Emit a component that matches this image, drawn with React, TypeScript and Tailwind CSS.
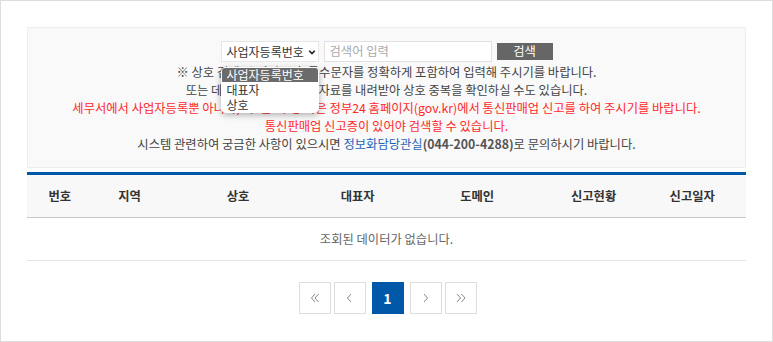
import React from 'react';

const font = { fontFamily: '"Malgun Gothic", "Noto Sans CJK KR", "Noto Sans", sans-serif' };

const columns = [
  { label: '번호', w: 'w-[66px]' },
  { label: '지역', w: 'w-[74px]' },
  { label: '상호', w: 'w-[144px]' },
  { label: '대표자', w: 'w-[96px]' },
  { label: '도메인', w: 'w-[144px]' },
  { label: '신고현황', w: 'w-[90px]' },
  { label: '신고일자', w: 'w-[108px]' },
];

const Chevron: React.FC<{ dir: 'left' | 'right'; double?: boolean }> = ({ dir, double }) => {
  const one = dir === 'left' ? 'M6 2 L2.5 6 L6 10' : 'M3 2 L6.5 6 L3 10';
  const two = dir === 'left' ? 'M9.5 2 L6 6 L9.5 10' : 'M6.5 2 L10 6 L6.5 10';
  return (
    <svg width={double ? 12 : 9} height="12" viewBox={double ? '0 0 12 12' : '0 0 9 12'}>
      <path d={double && dir === 'right' ? 'M2 2 L5.5 6 L2 10' : one} fill="none" stroke="#888" strokeWidth="1" />
      {double && <path d={two} fill="none" stroke="#888" strokeWidth="1" />}
    </svg>
  );
};

const PageButton: React.FC<{ children: React.ReactNode; active?: boolean }> = ({ children, active }) => (
  <button
    className={
      active
        ? 'w-8 h-8 flex items-center justify-center bg-[#0059a8] border border-[#0059a8] text-white text-[14px] font-bold'
        : 'w-8 h-8 flex items-center justify-center bg-white border border-[#ddd]'
    }
  >
    {children}
  </button>
);

const App: React.FC = () => {
  return (
    <div className="w-[773px] h-[342px] bg-white border border-[#ddd] text-[12.3px] text-[#444]" style={font}>
      <div className="px-[26px] pt-[26px]">
        {/* Search box */}
        <div className="h-[141px] bg-[#f9f9f9] border border-[#eee] pt-[13px] flex flex-col items-center">
          <div className="relative flex items-center">
            <div className="w-[98px] h-[21px] bg-white border border-[#e6e6e6] flex items-center justify-between pl-[5px] pr-[2px] text-[12px] text-[#333] whitespace-nowrap">
              <span>사업자등록번호</span>
              <svg width="8" height="8" viewBox="0 0 10 10" className="shrink-0">
                <path d="M1.5 3.5 L5 7 L8.5 3.5" fill="none" stroke="#222" strokeWidth="2" />
              </svg>
            </div>
            <div className="ml-[5px] w-[168px] h-[21px] bg-white border border-[#e0e0e0] flex items-center pl-[5px] text-[#aaa]">
              검색어 입력
            </div>
            <button className="ml-[5px] w-[56px] h-[17px] bg-[#666] text-white leading-[17px]">검색</button>

            {/* Open dropdown list */}
            <div className="absolute left-0 top-[26px] w-[98px] bg-white rounded-[5px] shadow-[0_2px_6px_rgba(0,0,0,0.3)] py-[1px] z-10 text-[12px] whitespace-nowrap">
              <div className="mx-[1px] h-[14px] leading-[14px] bg-[#6b6b6b] text-white pl-[5px] rounded-t-[3px]">사업자등록번호</div>
              <div className="h-[15px] leading-[15px] text-[#333] pl-[6px]">대표자</div>
              <div className="h-[15px] leading-[15px] text-[#333] pl-[6px]">상호</div>
            </div>
          </div>

          <div className="mt-[1px] leading-[18px] text-center">
            <p>※ 상호 검색 시 띄어쓰기, 특수문자를 정확하게 포함하여 입력해 주시기를 바랍니다.</p>
            <p>또는 데이터 다운로드에서 자료를 내려받아 상호 중복을 확인하실 수도 있습니다.</p>
            <p className="text-[#ff2a2a]">세무서에서 사업자등록뿐 아니라, 시·군·구청 혹은 정부24 홈페이지(gov.kr)에서 통신판매업 신고를 하여 주시기를 바랍니다.</p>
            <p className="text-[#ff2a2a]">통신판매업 신고증이 있어야 검색할 수 있습니다.</p>
            <p>
              시스템 관련하여 궁금한 사항이 있으시면 <span className="text-[#1f63b6]">정보화담당관실</span>
              <span className="font-bold text-[#555]">(044-200-4288)</span>로 문의하시기 바랍니다.
            </p>
          </div>
        </div>

        {/* Table */}
        <div className="mt-[4px] border-t-[3px] border-[#0059a8]">
          <div className="flex h-[43px] bg-[#f8f8f8] border-b border-[#c8c8c8]">
            {columns.map((c) => (
              <div key={c.label} className={`${c.w} flex items-center justify-center font-bold text-[#333]`}>
                {c.label}
              </div>
            ))}
          </div>
          <div className="h-[43px] flex items-center justify-center border-b border-[#e6e6e6] text-[#666]">
            조회된 데이터가 없습니다.
          </div>
        </div>

        {/* Pagination */}
        <div className="mt-[21px] flex justify-center items-center pl-[2px]">
          <PageButton><Chevron dir="left" double /></PageButton>
          <div className="w-[3px]" />
          <PageButton><Chevron dir="left" /></PageButton>
          <div className="w-[6px]" />
          <PageButton active>1</PageButton>
          <div className="w-[6px]" />
          <PageButton><Chevron dir="right" /></PageButton>
          <div className="w-[3px]" />
          <PageButton><Chevron dir="right" double /></PageButton>
        </div>
      </div>
    </div>
  );
};

export default App;
